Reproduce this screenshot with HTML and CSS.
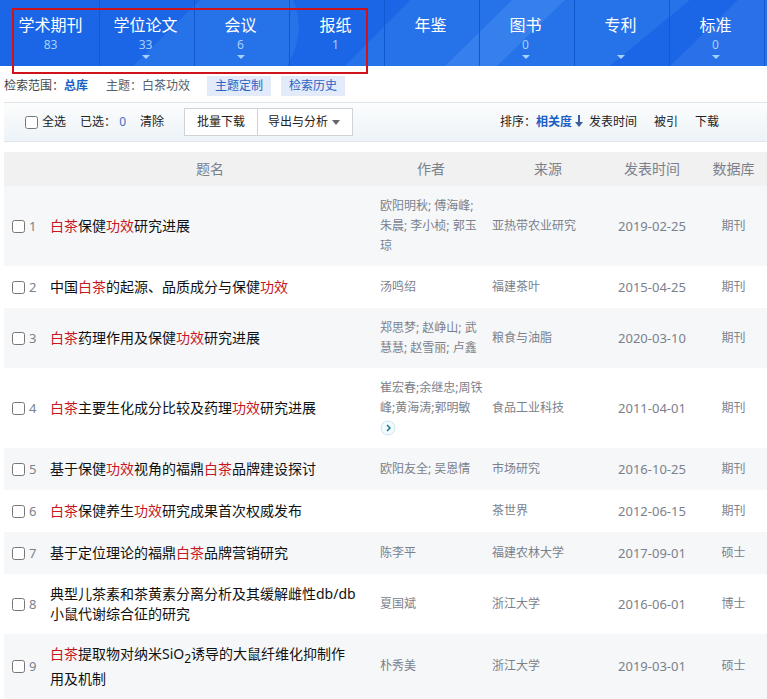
FILE: index.html
```html
<!DOCTYPE html>
<html lang="zh-CN">
<head>
<meta charset="utf-8">
<meta name="viewport" content="width=device-width, initial-scale=1">
<title>检索结果</title>
<link rel="stylesheet" href="styles.css">
</head>
<body>
<header class="banner">
  <svg class="banner-art" viewBox="0 0 767 66" preserveAspectRatio="none" aria-hidden="true">
    <rect width="767" height="66" fill="#1a66e6"/>
    <path d="M200 0H293Q307 32 287 66H133Z" fill="#2673e9"/>
    <path d="M410 0H690L610 66H345Z" fill="#2672e9"/>
    <path d="M512 0H565L497 66H445Z" fill="#3580ec"/>
    <path d="M738 0H767V66H670Z" fill="#2a70e8"/>
  </svg>
  <nav class="types" aria-label="文献类型">
    <a class="type" href="#"><span class="type-name">学术期刊</span><span class="type-count">83</span></a>
    <a class="type more" href="#"><span class="type-name">学位论文</span><span class="type-count">33</span></a>
    <a class="type more" href="#"><span class="type-name">会议</span><span class="type-count">6</span></a>
    <a class="type" href="#"><span class="type-name">报纸</span><span class="type-count">1</span></a>
    <a class="type" href="#"><span class="type-name">年鉴</span><span class="type-count"></span></a>
    <a class="type more" href="#"><span class="type-name">图书</span><span class="type-count">0</span></a>
    <a class="type more" href="#"><span class="type-name">专利</span><span class="type-count"></span></a>
    <a class="type more" href="#"><span class="type-name">标准</span><span class="type-count">0</span></a>
  </nav>
  <div class="highlight"></div>
</header>

<main class="results">
  <div class="scope">
    <span class="scope-range">检索范围：<b>总库</b></span>
    <span class="scope-topic">主题：白茶功效</span>
    <button class="chip" type="button">主题定制</button>
    <button class="chip" type="button">检索历史</button>
  </div>

  <div class="toolbar">
    <label class="pick-all"><input class="box" type="checkbox">全选</label>
    <span class="picked">已选： <b>0</b></span>
    <a class="clear" href="#">清除</a>
    <div class="actions">
      <button class="action" type="button">批量下载</button>
      <button class="action" type="button">导出与分析<i class="caret"></i></button>
    </div>
    <div class="sort">
      <span>排序：</span>
      <a class="active" href="#">相关度<svg class="arrow" viewBox="0 0 8 12" aria-hidden="true"><path d="M3 0h2v7h3L4 12 0 7h3z"/></svg></a>
      <a href="#">发表时间</a>
      <a href="#">被引</a>
      <a href="#">下载</a>
    </div>
  </div>

  <table class="papers">
    <colgroup><col class="c-no"><col><col class="c-author"><col class="c-source"><col class="c-date"><col class="c-db"></colgroup>
    <thead>
      <tr><th></th><th class="title">题名</th><th>作者</th><th>来源</th><th>发表时间</th><th>数据库</th></tr>
    </thead>
    <tbody>
      <tr>
        <td class="no"><label><input class="box" type="checkbox">1</label></td>
        <td class="title"><a href="#"><em>白茶</em>保健<em>功效</em>研究进展</a></td>
        <td class="author">欧阳明秋; 傅海峰; 朱晨; 李小桢; 郭玉琼</td>
        <td>亚热带农业研究</td><td class="date">2019-02-25</td><td class="db">期刊</td>
      </tr>
      <tr>
        <td class="no"><label><input class="box" type="checkbox">2</label></td>
        <td class="title"><a href="#">中国<em>白茶</em>的起源、品质成分与保健<em>功效</em></a></td>
        <td class="author">汤鸣绍</td>
        <td>福建茶叶</td><td class="date">2015-04-25</td><td class="db">期刊</td>
      </tr>
      <tr>
        <td class="no"><label><input class="box" type="checkbox">3</label></td>
        <td class="title"><a href="#"><em>白茶</em>药理作用及保健<em>功效</em>研究进展</a></td>
        <td class="author">郑思梦; 赵峥山; 武慧慧; 赵雪丽; 卢鑫</td>
        <td>粮食与油脂</td><td class="date">2020-03-10</td><td class="db">期刊</td>
      </tr>
      <tr>
        <td class="no"><label><input class="box" type="checkbox">4</label></td>
        <td class="title"><a href="#"><em>白茶</em>主要生化成分比较及药理<em>功效</em>研究进展</a></td>
        <td class="author">崔宏春;余继忠;周铁峰;黄海涛;郭明敏
          <button class="expand" type="button" aria-label="更多作者"><svg viewBox="0 0 16 16"><circle cx="8" cy="8" r="7"/><path d="M7 5l3 3-3 3"/></svg></button></td>
        <td>食品工业科技</td><td class="date">2011-04-01</td><td class="db">期刊</td>
      </tr>
      <tr>
        <td class="no"><label><input class="box" type="checkbox">5</label></td>
        <td class="title"><a href="#">基于保健<em>功效</em>视角的福鼎<em>白茶</em>品牌建设探讨</a></td>
        <td class="author">欧阳友全; 吴恩情</td>
        <td>市场研究</td><td class="date">2016-10-25</td><td class="db">期刊</td>
      </tr>
      <tr>
        <td class="no"><label><input class="box" type="checkbox">6</label></td>
        <td class="title"><a href="#"><em>白茶</em>保健养生<em>功效</em>研究成果首次权威发布</a></td>
        <td class="author"></td>
        <td>茶世界</td><td class="date">2012-06-15</td><td class="db">期刊</td>
      </tr>
      <tr>
        <td class="no"><label><input class="box" type="checkbox">7</label></td>
        <td class="title"><a href="#">基于定位理论的福鼎<em>白茶</em>品牌营销研究</a></td>
        <td class="author">陈李平</td>
        <td>福建农林大学</td><td class="date">2017-09-01</td><td class="db">硕士</td>
      </tr>
      <tr>
        <td class="no"><label><input class="box" type="checkbox">8</label></td>
        <td class="title"><a href="#">典型儿茶素和茶黄素分离分析及其缓解雌性db/db<br>小鼠代谢综合征的研究</a></td>
        <td class="author">夏国斌</td>
        <td>浙江大学</td><td class="date">2016-06-01</td><td class="db">博士</td>
      </tr>
      <tr>
        <td class="no"><label><input class="box" type="checkbox">9</label></td>
        <td class="title"><a href="#"><em>白茶</em>提取物对纳米SiO<sub>2</sub>诱导的大鼠纤维化抑制作<br>用及机制</a></td>
        <td class="author">朴秀美</td>
        <td>浙江大学</td><td class="date">2019-03-01</td><td class="db">硕士</td>
      </tr>
    </tbody>
  </table>
</main>
</body>
</html>
```
FILE: styles.css
```css
* {
  box-sizing: border-box;
}

body {
  margin: 0;
  background: #fff;
  color: #222;
  font: 12px/20px "Noto Sans", "Noto Sans CJK SC", sans-serif;
}

a {
  color: inherit;
  text-decoration: none;
}

button {
  margin: 0;
  font: inherit;
  cursor: pointer;
}

/* Banner with document types */
.banner {
  position: relative;
}

.banner-art {
  position: absolute;
  inset: 0;
  width: 100%;
  height: 100%;
}

.types {
  position: relative;
  display: flex;
  height: 66px;
  padding-left: 5px;
  overflow: hidden;
}

.type {
  display: flex;
  flex: 0 0 95px;
  flex-direction: column;
  align-items: center;
  padding: 15px 3px 0 0;
  border-right: 1px solid #1258cf;
  color: #fff;
}

.type-name {
  font-size: 16px;
  line-height: 20px;
}

.type-count {
  height: 20px;
  color: #a9d0fa;
}

.more::after {
  content: "";
  border: 4px solid transparent;
  border-top-color: #a3d3fb;
  border-bottom: 0;
}

.highlight {
  position: absolute;
  top: 8px;
  left: 12px;
  width: 356px;
  height: 66px;
  border: 2px solid #d0121b;
  pointer-events: none;
}

/* Search scope */
.results {
  padding-left: 4px;
}

.scope {
  display: flex;
  align-items: center;
  padding-top: 10px;
  color: #444;
}

.scope-range b {
  color: #1a5fc4;
}

.scope-topic {
  margin: 0 17px 0 18px;
  color: #555f6b;
}

.chip {
  padding: 0 8px;
  margin-right: 10px;
  border: 0;
  background: #e3ebfa;
  color: #2a62c4;
}

/* Toolbar */
.box {
  width: 13px;
  height: 13px;
  margin: 0 4px 0 0;
}

.toolbar {
  display: flex;
  align-items: center;
  height: 40px;
  margin: 6px 0 10px;
  padding: 0 48px 0 21px;
  border: solid #dfe5ea;
  border-width: 1px 0;
  background: linear-gradient(#fcfdfd, #edf3f8);
}

.pick-all {
  display: flex;
  align-items: center;
}

.picked {
  margin: 0 14px;
}

.picked b {
  color: #3f6fc0;
  font-weight: 400;
}

.actions {
  display: flex;
  margin-left: 20px;
}

.action {
  display: flex;
  align-items: center;
  height: 28px;
  padding: 0 12px;
  border: 1px solid #cfd3d8;
  background: #fff;
  color: #222;
}

.action + .action {
  margin-left: -1px;
  padding: 0 12px 0 10px;
}

.caret {
  margin-left: 4px;
  border: 4px solid transparent;
  border-top: 5px solid #666;
  border-bottom: 0;
}

.sort {
  display: flex;
  align-items: center;
  gap: 17px;
  margin-left: auto;
}

.sort span {
  margin-right: -17px;
}

.sort .active {
  margin-right: -11px;
  color: #1a5fc4;
  font-weight: 700;
}

.arrow {
  width: 8px;
  height: 12px;
  margin-left: 3px;
  vertical-align: -1px;
  fill: #3d5d9c;
}

/* Result list */
.papers {
  width: 100%;
  border-collapse: collapse;
  table-layout: fixed;
  color: #7b818c;
}

.c-no {
  width: 46px;
}

.c-author {
  width: 122px;
}

.c-source {
  width: 112px;
}

.c-date {
  width: 96px;
}

.c-db {
  width: 67px;
}

.papers th {
  padding: 7px 0;
  background: #f1f1f1;
  font-size: 14px;
  font-weight: 400;
  text-align: center;
}

.papers td {
  padding: 10px 0;
}

.papers tbody tr {
  height: 42px;
}

.papers tbody tr:nth-child(odd) {
  background: #f5f7f9;
}

.papers .author {
  padding: 10px 8px 10px 10px;
}

.papers .no {
  padding-left: 8px;
  font-size: 13px;
}

.no label {
  display: flex;
  align-items: center;
}

.papers td.title {
  color: #111;
  font-size: 14px;
}

.papers .date {
  font-size: 13px;
  text-align: center;
}

.papers .db {
  text-align: center;
}

em {
  color: #c81623;
  font-style: normal;
}

sub {
  font-size: 12px;
}

.expand {
  display: block;
  width: 16px;
  height: 16px;
  margin: 2px 0;
  padding: 0;
  border: 0;
  background: none;
}

.expand svg {
  display: block;
  width: 16px;
  height: 16px;
  fill: #f1fafd;
  stroke: #cfe7ef;
}

.expand path {
  fill: none;
  stroke: #23788f;
  stroke-width: 1.5;
}
```
